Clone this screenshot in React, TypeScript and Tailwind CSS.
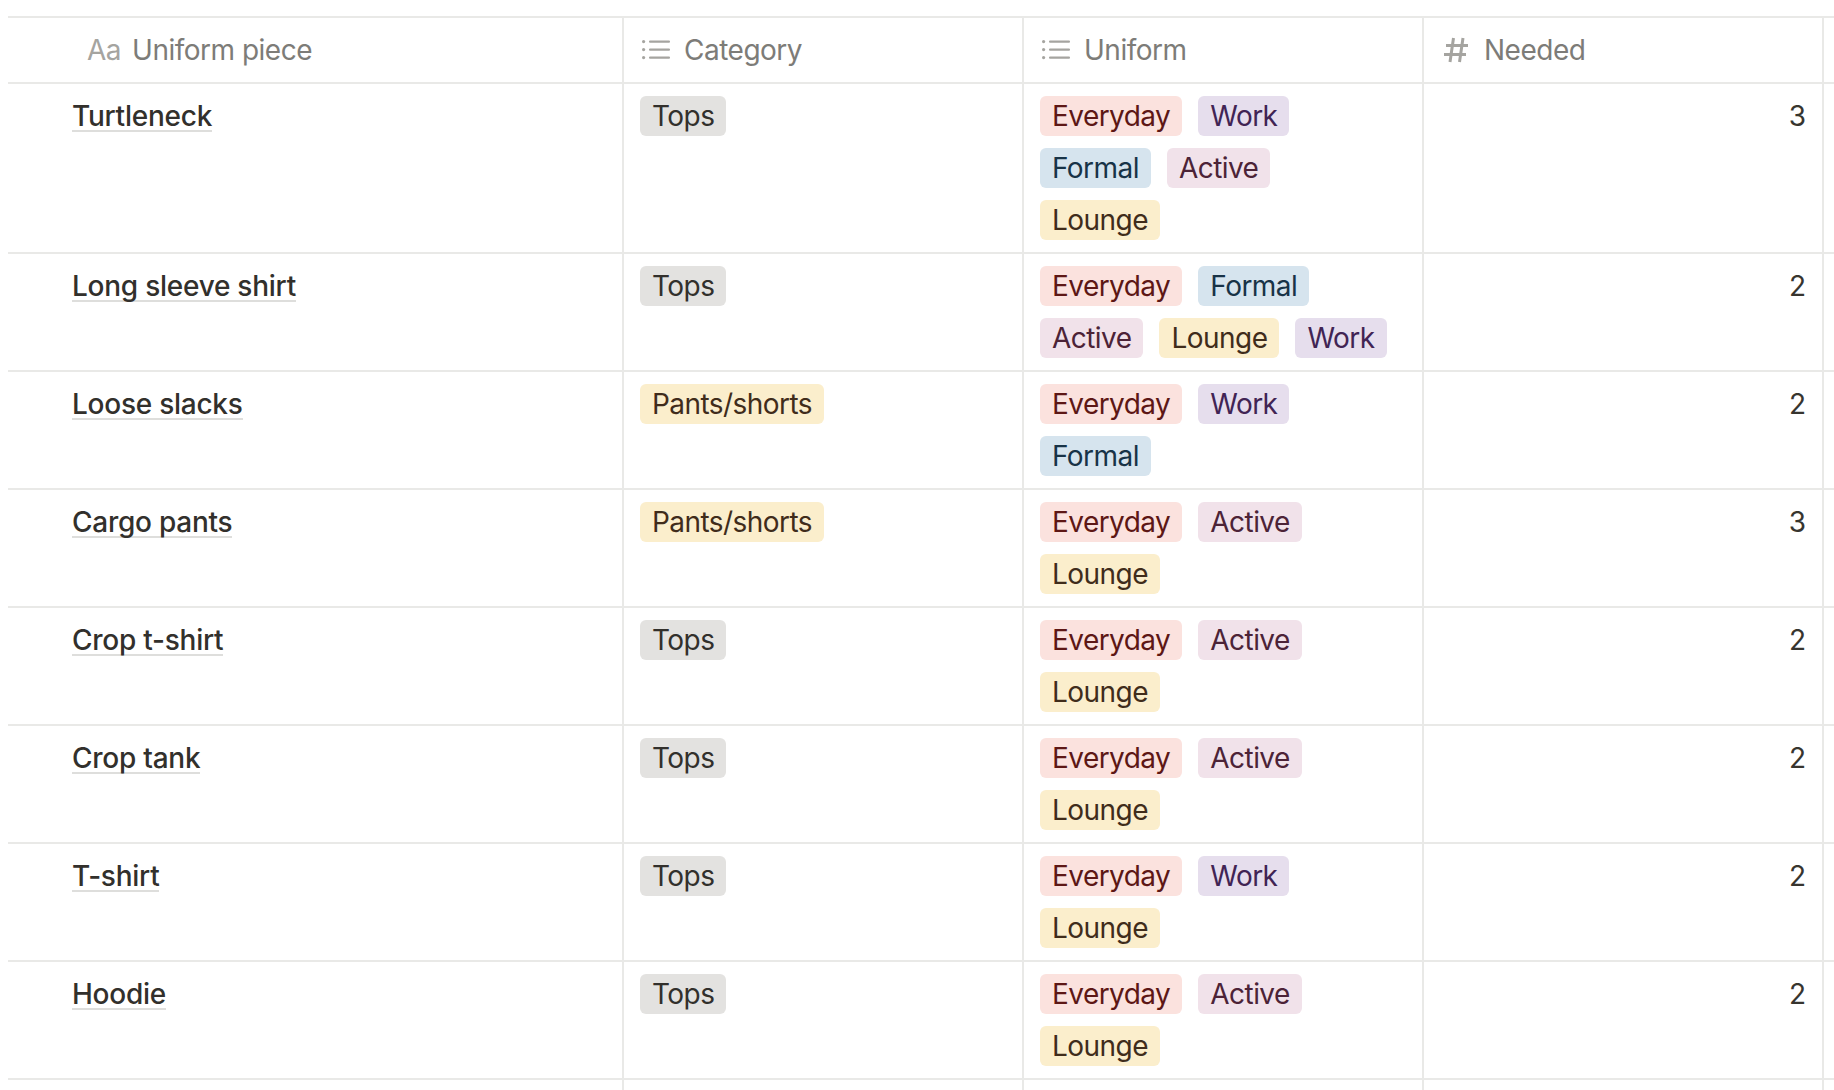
import React from "react";

type TagName =
  | "Tops"
  | "Pants/shorts"
  | "Everyday"
  | "Work"
  | "Formal"
  | "Active"
  | "Lounge";

const tagColors: Record<TagName, string> = {
  Tops: "bg-[#e3e2e0] text-[#32302c]",
  "Pants/shorts": "bg-[#fbeecc] text-[#402c1b]",
  Everyday: "bg-[#fbe2de] text-[#5d1715]",
  Work: "bg-[#e6deed] text-[#412454]",
  Formal: "bg-[#d6e4ee] text-[#183347]",
  Active: "bg-[#f1e2ea] text-[#4c2337]",
  Lounge: "bg-[#fbeecc] text-[#402c1b]",
};

const rows: {
  name: string;
  category: TagName;
  uniform: TagName[];
  needed: number;
}[] = [
  { name: "Turtleneck", category: "Tops", uniform: ["Everyday", "Work", "Formal", "Active", "Lounge"], needed: 3 },
  { name: "Long sleeve shirt", category: "Tops", uniform: ["Everyday", "Formal", "Active", "Lounge", "Work"], needed: 2 },
  { name: "Loose slacks", category: "Pants/shorts", uniform: ["Everyday", "Work", "Formal"], needed: 2 },
  { name: "Cargo pants", category: "Pants/shorts", uniform: ["Everyday", "Active", "Lounge"], needed: 3 },
  { name: "Crop t-shirt", category: "Tops", uniform: ["Everyday", "Active", "Lounge"], needed: 2 },
  { name: "Crop tank", category: "Tops", uniform: ["Everyday", "Active", "Lounge"], needed: 2 },
  { name: "T-shirt", category: "Tops", uniform: ["Everyday", "Work", "Lounge"], needed: 2 },
  { name: "Hoodie", category: "Tops", uniform: ["Everyday", "Active", "Lounge"], needed: 2 },
];

const gridCols = "grid grid-cols-[616px_400px_400px_400px_1fr]";

const Tag = ({ name }: { name: TagName }) => (
  <span className={`h-10 px-3 rounded-[6px] leading-10 whitespace-nowrap tracking-[-0.55px] ${tagColors[name]}`}>
    {name}
  </span>
);

const ListIcon = () => (
  <svg width="28" height="20" viewBox="0 0 28 20" className="shrink-0 text-[#a5a4a0]">
    <g fill="currentColor">
      <circle cx="1.6" cy="1.6" r="1.6" />
      <circle cx="1.6" cy="9.6" r="1.6" />
      <circle cx="1.6" cy="17.6" r="1.6" />
      <rect x="7" y="0.4" width="21" height="2.4" rx="1" />
      <rect x="7" y="8.4" width="21" height="2.4" rx="1" />
      <rect x="7" y="16.4" width="21" height="2.4" rx="1" />
    </g>
  </svg>
);

const HashIcon = () => (
  <svg width="24" height="26" viewBox="0 0 24 26" className="shrink-0 text-[#a5a4a0]">
    <path
      d="M9.5 1 6 25M19 1 15.5 25M2 8.5h22M0 17.5h22"
      fill="none"
      stroke="currentColor"
      strokeWidth="3"
    />
  </svg>
);

export default function App() {
  return (
    <div
      className="min-h-[1090px] h-[1090px] overflow-hidden bg-white pt-4 pl-2 text-[28px] text-[#37352f]"
      style={{ fontFamily: "Inter, 'Noto Sans', sans-serif" }}
    >
      {/* header */}
      <div className={`${gridCols} h-[68px] border-y-2 border-[#e9e9e7] tracking-[-0.5px] text-[#7d7c78]`}>
        <div className="flex items-center border-r-2 border-[#e9e9e7] pl-[79px]">
          <span className="mr-[11px] text-[#a5a4a0]">Aa</span>
          Uniform piece
        </div>
        <div className="flex items-center gap-[14px] border-r-2 border-[#e9e9e7] pl-[18px]">
          <ListIcon />
          Category
        </div>
        <div className="flex items-center gap-[14px] border-r-2 border-[#e9e9e7] pl-[18px]">
          <ListIcon />
          Uniform
        </div>
        <div className="flex items-center gap-4 border-r-2 border-[#e9e9e7] pl-5">
          <HashIcon />
          Needed
        </div>
        <div />
      </div>

      {/* rows */}
      {rows.map((row) => (
        <div key={row.name} className={`${gridCols} border-b-2 border-[#e9e9e7]`}>
          <div className="border-r-2 border-[#e9e9e7] pl-16 pt-3">
            <span className="block h-9 w-fit border-b-2 border-[#dededc] font-medium leading-10 tracking-[-0.25px] text-[#32302c]">
              {row.name}
            </span>
          </div>
          <div className="flex items-start border-r-2 border-[#e9e9e7] px-4 py-3">
            <Tag name={row.category} />
          </div>
          <div className="flex flex-wrap content-start gap-x-4 gap-y-3 border-r-2 border-[#e9e9e7] px-4 py-3">
            {row.uniform.map((tag) => (
              <Tag key={tag} name={tag} />
            ))}
          </div>
          <div className="border-r-2 border-[#e9e9e7] px-4 pt-3 text-right leading-10">
            {row.needed}
          </div>
          <div />
        </div>
      ))}

      {/* next row, cut off at the bottom */}
      <div className={`${gridCols} h-6`}>
        <div className="border-r-2 border-[#e9e9e7]" />
        <div className="border-r-2 border-[#e9e9e7]" />
        <div className="border-r-2 border-[#e9e9e7]" />
        <div className="border-r-2 border-[#e9e9e7]" />
        <div />
      </div>
    </div>
  );
}
